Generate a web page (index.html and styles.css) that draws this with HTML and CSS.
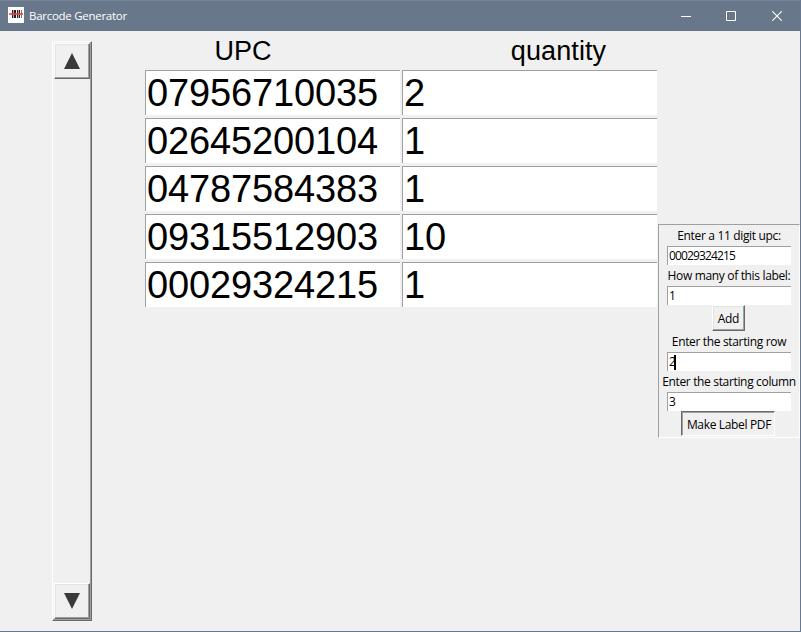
FILE: index.html
```
<!DOCTYPE html>
<html lang="en">
<head>
<meta charset="utf-8">
<title>Barcode Generator</title>
<link rel="stylesheet" href="styles.css">
</head>
<body>
<div class="window">
  <header class="titlebar">
    <svg class="app-icon" width="16" height="16" viewBox="0 0 16 16"><path fill="#fff" d="M0 0h16v16H0z"/><path fill="#222" d="M4 3h1v8H4zM6 3h2v8H6zM9 3h1v8H9zM11 3h1v8h-1z"/><path fill="#777" d="M5 3h.6v8H5zM10 3h.6v8H10zM13 3h1v8h-1z"/><path fill="#f0403c" fill-opacity=".8" d="M1 6h14v2H1z"/></svg>
    <h1 class="title">Barcode Generator</h1>
    <div class="controls">
      <svg width="10" height="10" viewBox="0 0 10 10"><path fill="#fff" d="M0 5h10v1H0z"/></svg>
      <svg width="10" height="10" viewBox="0 0 10 10"><path fill="none" stroke="#fff" d="M.5.5h9v9h-9z"/></svg>
      <svg width="10" height="10" viewBox="0 0 10 10"><path fill="none" stroke="#fff" stroke-width="1.1" d="M.2.2l9.6 9.6M9.8.2L.2 9.8"/></svg>
    </div>
  </header>
  <main class="content">
    <div class="scrollbar">
      <div class="arrow"><svg width="16" height="16" viewBox="0 0 16 16"><path fill="#3a3a3a" d="M8 0l8 16H0z"/></svg></div>
      <div class="arrow"><svg width="16" height="16" viewBox="0 0 16 16"><path fill="#3a3a3a" d="M0 0h16L8 16z"/></svg></div>
    </div>
    <section class="table">
      <div class="head upc">UPC</div><div class="head qty">quantity</div>
      <div class="cell">07956710035</div><div class="cell">2</div>
      <div class="cell">02645200104</div><div class="cell">1</div>
      <div class="cell">04787584383</div><div class="cell">1</div>
      <div class="cell">09315512903</div><div class="cell">10</div>
      <div class="cell">00029324215</div><div class="cell">1</div>
    </section>
    <section class="panel">
      <div class="label">Enter a 11 digit upc:</div>
      <div class="entry">00029324215</div>
      <div class="label">How many of this label:</div>
      <div class="entry">1</div>
      <div class="button add">Add</div>
      <div class="label">Enter the starting row</div>
      <div class="entry">2<span class="caret"></span></div>
      <div class="label">Enter the starting column</div>
      <div class="entry">3</div>
      <div class="button make">Make Label PDF</div>
    </section>
  </main>
</div>
</body>
</html>
```
FILE: styles.css
```
* { box-sizing: border-box; }
body { margin: 0; background: #f0f0f0; font-family: "Open Sans", "Noto Sans", sans-serif; font-size: 12px; color: #000; }
.window { width: 801px; height: 632px; background: #f0f0f0; border-right: 1px solid #68788d; border-bottom: 1px solid #68788d; overflow: hidden; }
.titlebar { height: 31px; background: #68778a; border-top: 1px solid #748397; display: flex; align-items: center; padding-left: 8px; color: #fff; }
.app-icon { margin-top: -2px; }
.title { margin: 0 0 0 5px; font-size: 11.5px; font-weight: 400; letter-spacing: -0.28px; line-height: 16px; white-space: nowrap; }
.controls { margin-left: auto; margin-right: 18px; margin-top: -1px; display: flex; }
.controls svg { display: block; margin-left: 36px; }
.controls svg:nth-child(2) { margin-left: 35px; }
.content { display: flex; align-items: flex-start; height: 600px; padding-left: 52px; }
.scrollbar { width: 40px; height: 580px; margin-top: 10px; flex: none; display: flex; flex-direction: column; justify-content: space-between; border: 1px solid; border-color: #fff #696969 #696969 #fff; box-shadow: inset -1px -1px #a0a0a0; padding: 1px; }
.arrow { width: 36px; height: 36px; display: flex; align-items: center; justify-content: center; border: 1px solid; border-color: #fff #696969 #696969 #fff; box-shadow: inset -1px -1px #a0a0a0, inset 1px 1px #e3e3e3; }
.table { margin-left: 53px; flex: none; display: grid; grid-template-columns: 255px 255px; column-gap: 2px; grid-template-rows: 39px; grid-auto-rows: 48px; font-family: "Liberation Sans", Arial, sans-serif; }
.head { font-size: 27px; line-height: 40px; text-align: center; }
.upc { padding-right: 59px; }
.qty { padding-left: 58px; letter-spacing: 0.1px; }
.cell { height: 45px; background: #fff; border-top: 1px solid #a0a0a0; border-left: 1px solid #a0a0a0; padding-left: 1px; font-size: 38px; line-height: 44px; letter-spacing: -0.13px; white-space: nowrap; }
.panel { width: 142px; height: 214px; margin: 193px 0 0 1px; flex: none; border: 1px solid; border-color: #a0a0a0 #fff #fff #a0a0a0; display: flex; flex-direction: column; align-items: center; padding-top: 1px; letter-spacing: -0.34px; }
.label { height: 20px; line-height: 20px; white-space: nowrap; flex: none; }
.entry { width: 124px; height: 19px; margin-bottom: 1px; flex: none; display: flex; align-items: center; background: #fff; border-top: 1px solid #a0a0a0; border-left: 1px solid #a0a0a0; padding-left: 1px; line-height: 18px; letter-spacing: -0.85px; }
.caret { width: 2px; height: 15px; margin-left: -1px; background: #000; }
.button { flex: none; display: flex; align-items: center; justify-content: center; white-space: nowrap; border: 1px solid; }
.add { width: 33px; height: 26px; margin: -1px 1px 1px 0; border-color: #fff #696969 #696969 #fff; box-shadow: inset -1px -1px #a0a0a0, inset 1px 1px #e3e3e3; }
.make { width: 94px; height: 25px; margin: -1px 2px 0 0; padding: 2px 0 0 2px; border-color: #696969 #fff #fff #696969; box-shadow: inset 1px 1px #a0a0a0; }
```
